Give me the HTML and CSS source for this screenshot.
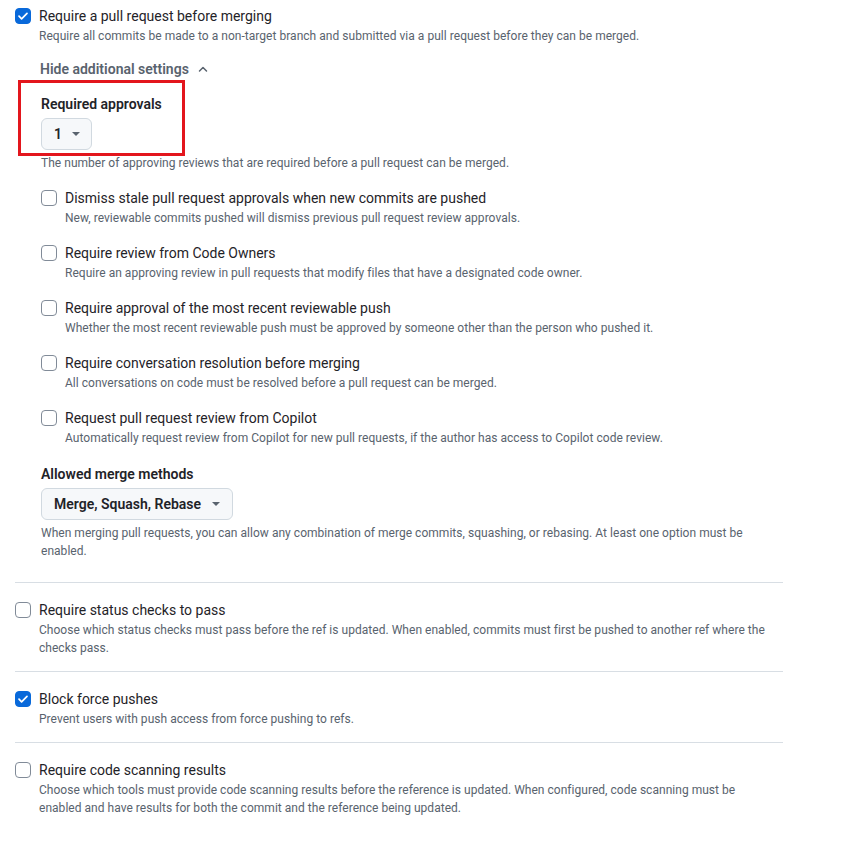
FILE: index.html
```html
<!DOCTYPE html>
<html>
<head>
<meta charset="utf-8">
<link rel="stylesheet" href="styles.css">
</head>
<body>
<div class="page">
  <div class="section first">
    <div class="row">
      <span class="cb checked"><svg viewBox="0 0 16 16" width="16" height="16"><path d="M4 8.2l2.6 2.6L12 5.4" fill="none" stroke="#fff" stroke-width="1.7" stroke-linecap="round" stroke-linejoin="round"/></svg></span>
      <div class="body">
        <div class="title">Require a pull request before merging</div>
        <div class="desc">Require all commits be made to a non-target branch and submitted via a pull request before they can be merged.</div>
        <div class="toggle">Hide additional settings <svg class="chev" viewBox="0 0 12 8" width="12" height="8"><path d="M2.5 6L6 2.5 9.5 6" fill="none" stroke="#59636e" stroke-width="1.5" stroke-linecap="round" stroke-linejoin="round"/></svg></div>
        <div class="nested">
          <div class="highlight-wrap">
            <div class="label">Required approvals</div>
            <div class="btn btn-small"><span>1</span><span class="caret"></span></div>
            <div class="redbox"></div>
          </div>
          <div class="desc gap4">The number of approving reviews that are required before a pull request can be merged.</div>

          <div class="row sub">
            <span class="cb"></span>
            <div class="body">
              <div class="title">Dismiss stale pull request approvals when new commits are pushed</div>
              <div class="desc">New, reviewable commits pushed will dismiss previous pull request review approvals.</div>
            </div>
          </div>
          <div class="row sub">
            <span class="cb"></span>
            <div class="body">
              <div class="title">Require review from Code Owners</div>
              <div class="desc">Require an approving review in pull requests that modify files that have a designated code owner.</div>
            </div>
          </div>
          <div class="row sub">
            <span class="cb"></span>
            <div class="body">
              <div class="title">Require approval of the most recent reviewable push</div>
              <div class="desc">Whether the most recent reviewable push must be approved by someone other than the person who pushed it.</div>
            </div>
          </div>
          <div class="row sub">
            <span class="cb"></span>
            <div class="body">
              <div class="title">Require conversation resolution before merging</div>
              <div class="desc">All conversations on code must be resolved before a pull request can be merged.</div>
            </div>
          </div>
          <div class="row sub">
            <span class="cb"></span>
            <div class="body">
              <div class="title">Request pull request review from Copilot</div>
              <div class="desc">Automatically request review from Copilot for new pull requests, if the author has access to Copilot code review.</div>
            </div>
          </div>

          <div class="label merge-label">Allowed merge methods</div>
          <div class="btn btn-merge"><span>Merge, Squash, Rebase</span><span class="caret"></span></div>
          <div class="desc gap4">When merging pull requests, you can allow any combination of merge commits, squashing, or rebasing. At least one option must be enabled.</div>
        </div>
      </div>
    </div>
  </div>

  <div class="section">
    <div class="row">
      <span class="cb"></span>
      <div class="body">
        <div class="title">Require status checks to pass</div>
        <div class="desc">Choose which status checks must pass before the ref is updated. When enabled, commits must first be pushed to another ref where the checks pass.</div>
      </div>
    </div>
  </div>

  <div class="section">
    <div class="row">
      <span class="cb checked"><svg viewBox="0 0 16 16" width="16" height="16"><path d="M4 8.2l2.6 2.6L12 5.4" fill="none" stroke="#fff" stroke-width="1.7" stroke-linecap="round" stroke-linejoin="round"/></svg></span>
      <div class="body">
        <div class="title">Block force pushes</div>
        <div class="desc">Prevent users with push access from force pushing to refs.</div>
      </div>
    </div>
  </div>

  <div class="section">
    <div class="row">
      <span class="cb"></span>
      <div class="body">
        <div class="title">Require code scanning results</div>
        <div class="desc">Choose which tools must provide code scanning results before the reference is updated. When configured, code scanning must be enabled and have results for both the commit and the reference being updated.</div>
      </div>
    </div>
  </div>
</div>
</body>
</html>
```
FILE: styles.css
```css
* { box-sizing: border-box; }
html, body { margin: 0; padding: 0; background: #fff; }
body {
  font-family: Roboto, "Noto Sans", sans-serif;
  color: #1f2328;
  font-size: 14px;
}
.page {
  width: 783px;
  padding-left: 15px;
}
.section {
  border-top: 1px solid #d8dee4;
  padding: 17px 0 14px;
}
.section.first {
  border-top: none;
  padding: 6px 0 22px;
}
.row {
  display: flex;
  gap: 8px;
  align-items: flex-start;
}
.cb {
  flex: none;
  width: 16px;
  height: 16px;
  margin-top: 2px;
  border: 1px solid #818b98;
  border-radius: 4px;
  background: #fff;
  display: flex;
  align-items: center;
  justify-content: center;
}
.cb.checked {
  background: #0969da;
  border-color: #0969da;
}
.cb svg { display: block; margin: -1px; }
.body { flex: 1; min-width: 0; padding-right: 16px; }
.row .row .body { padding-right: 0; }
.title {
  font-size: 14px;
  line-height: 20px;
  color: #1f2328;
}
.desc {
  font-size: 12px;
  line-height: 18px;
  color: #59636e;
  margin-top: 1px;
  letter-spacing: 0.03px;
}
.desc.gap4 { margin-top: 4px; }
.toggle {
  margin-top: 14px;
  margin-left: 1px;
  font-size: 14px;
  line-height: 20px;
  font-weight: 600;
  color: #59636e;
  display: flex;
  align-items: center;
  gap: 8px;
}
.chev { display: block; }
.nested {
  margin-left: 2px;
  margin-top: 15px;
}
.highlight-wrap { position: relative; }
.label {
  font-size: 14px;
  line-height: 20px;
  font-weight: 600;
  color: #1f2328;
}
.btn {
  margin-top: 4px;
  height: 32px;
  display: inline-flex;
  align-items: center;
  gap: 10px;
  padding: 0 12px;
  background: #f6f8fa;
  border: 1px solid #d1d9e0;
  border-radius: 6px;
  font-weight: 600;
  font-size: 14px;
  color: #1f2328;
  white-space: nowrap;
}
.btn-small { width: 51px; }
.btn-merge { width: 192px; justify-content: space-between; }
.caret {
  width: 0;
  height: 0;
  border-left: 4px solid transparent;
  border-right: 4px solid transparent;
  border-top: 4px solid #59636e;
}
.redbox {
  position: absolute;
  left: -23px;
  top: -14px;
  width: 167px;
  height: 76px;
  border: 3px solid #e3161d;
  pointer-events: none;
}
.sub { margin-top: 16px; }
.merge-label { margin-top: 17px; }
```
